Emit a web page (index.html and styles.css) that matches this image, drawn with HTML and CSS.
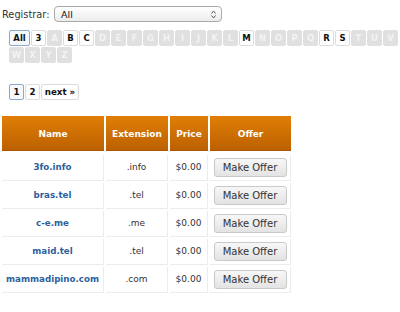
FILE: index.html
```html
<!DOCTYPE html>
<html>
<head>
<meta charset="utf-8">
<link rel="stylesheet" href="styles.css">
</head>
<body>
<div class="filter">
  <span class="filter-label">Registrar:</span>
  <div class="select">
    <span class="select-value">All</span>
    <svg class="select-arrows" width="5" height="9" viewBox="0 0 5 9"><path d="M0.5 3.5 L2.5 1 L4.5 3.5 M0.5 5.5 L2.5 8 L4.5 5.5" fill="none" stroke="#555" stroke-width="1"/></svg>
  </div>
</div>
<div class="letters">
  <span class="lt sel wide">All</span>
  <span class="lt on">3</span>
  <span class="lt off">A</span>
  <span class="lt on">B</span>
  <span class="lt on">C</span>
  <span class="lt off">D</span>
  <span class="lt off">E</span>
  <span class="lt off">F</span>
  <span class="lt off">G</span>
  <span class="lt off">H</span>
  <span class="lt off">I</span>
  <span class="lt off">J</span>
  <span class="lt off">K</span>
  <span class="lt off">L</span>
  <span class="lt on">M</span>
  <span class="lt off">N</span>
  <span class="lt off">O</span>
  <span class="lt off">P</span>
  <span class="lt off">Q</span>
  <span class="lt on">R</span>
  <span class="lt on">S</span>
  <span class="lt off">T</span>
  <span class="lt off">U</span>
  <span class="lt off">V</span>
  <span class="lt off">W</span>
  <span class="lt off">X</span>
  <span class="lt off">Y</span>
  <span class="lt off">Z</span>
</div>
<div class="pager">
  <span class="pg sel">1</span>
  <span class="pg">2</span>
  <span class="pg next">next »</span>
</div>
<table class="domains">
  <thead>
    <tr><th class="c-name">Name</th><th class="c-ext">Extension</th><th class="c-price">Price</th><th class="c-offer">Offer</th></tr>
  </thead>
  <tbody>
    <tr><td class="name">3fo.info</td><td>.info</td><td>$0.00</td><td><span class="btn">Make Offer</span></td></tr>
    <tr><td class="name">bras.tel</td><td>.tel</td><td>$0.00</td><td><span class="btn">Make Offer</span></td></tr>
    <tr><td class="name">c-e.me</td><td>.me</td><td>$0.00</td><td><span class="btn">Make Offer</span></td></tr>
    <tr><td class="name">maid.tel</td><td>.tel</td><td>$0.00</td><td><span class="btn">Make Offer</span></td></tr>
    <tr><td class="name">mammadipino.com</td><td>.com</td><td>$0.00</td><td><span class="btn">Make Offer</span></td></tr>
  </tbody>
</table>
</body>
</html>
```
FILE: styles.css
```css
html, body {
  margin: 0;
  padding: 0;
  background: #fff;
  font-family: "DejaVu Sans", Verdana, sans-serif;
  color: #222;
}

.filter {
  display: flex;
  align-items: center;
  margin-top: 6px;
  padding-left: 2px;
  height: 16px;
}
.filter-label {
  font-size: 9.8px;
  color: #333;
  width: 52px;
}
.select {
  box-sizing: border-box;
  width: 168px;
  height: 16px;
  border: 1px solid #a9a9a9;
  border-radius: 4px;
  background: linear-gradient(#ffffff, #ececec);
  display: flex;
  align-items: center;
  justify-content: space-between;
  padding: 0 5px 0 6px;
}
.select-value {
  font-size: 9.5px;
  color: #111;
}
.select-arrows {
  display: block;
}

.letters {
  display: flex;
  flex-wrap: wrap;
  gap: 1px;
  margin: 8px 0 0 9px;
  width: 391px;
}
.lt {
  box-sizing: border-box;
  width: 15px;
  height: 16px;
  border: 1px solid #dcdcdc;
  border-radius: 2px;
  font-size: 8.5px;
  font-weight: bold;
  line-height: 14px;
  text-align: center;
  color: #111;
  background: #fff;
}
.lt.wide {
  width: 21px;
}
.lt.sel {
  border-color: #8fa8c8;
  background: #f5f8fc;
}
.lt.off {
  background: #e0e0e0;
  border-color: #e0e0e0;
  color: #f3f3f3;
}

.pager {
  display: flex;
  gap: 1px;
  margin: 21px 0 0 9px;
}
.pg {
  box-sizing: border-box;
  min-width: 15px;
  height: 16px;
  border: 1px solid #dcdcdc;
  border-radius: 2px;
  font-size: 8.7px;
  font-weight: bold;
  line-height: 14px;
  text-align: center;
  color: #111;
  background: #fff;
}
.pg.sel {
  border-color: #8fa8c8;
  background: #f5f8fc;
}
.pg.next {
  width: 38px;
}

.domains {
  margin-top: 14px;
  border-collapse: separate;
  border-spacing: 2px;
  table-layout: fixed;
  width: 293px;
}
.domains th,
.domains td {
  box-sizing: border-box;
  text-align: center;
  vertical-align: middle;
}
.domains th {
  height: 37px;
  padding: 0;
  border-bottom: 2px solid #fff;
  background: linear-gradient(#e07e06, #bb6000);
  background-clip: padding-box;
  color: #fff;
  font-size: 9px;
  font-weight: bold;
  box-shadow: inset 0 -1px 0 #a95700;
}
.c-name { width: 102px; }
.c-ext { width: 62px; }
.c-price { width: 38px; }
.c-offer { width: 81px; }

.domains td {
  padding: 3px 0;
  border-right: 1px solid #ececec;
  border-bottom: 1px solid #ececec;
  font-size: 9px;
  color: #333;
  line-height: 19px;
}
.domains td.name {
  font-weight: bold;
  color: #2d5f9e;
  font-size: 8.7px;
}
.btn {
  display: inline-block;
  box-sizing: border-box;
  width: 73px;
  height: 19px;
  border: 1px solid #c9c9c9;
  border-radius: 3px;
  background: linear-gradient(#f7f7f7, #e3e3e3);
  font-size: 10px;
  line-height: 17px;
  color: #333;
  vertical-align: middle;
}
```
